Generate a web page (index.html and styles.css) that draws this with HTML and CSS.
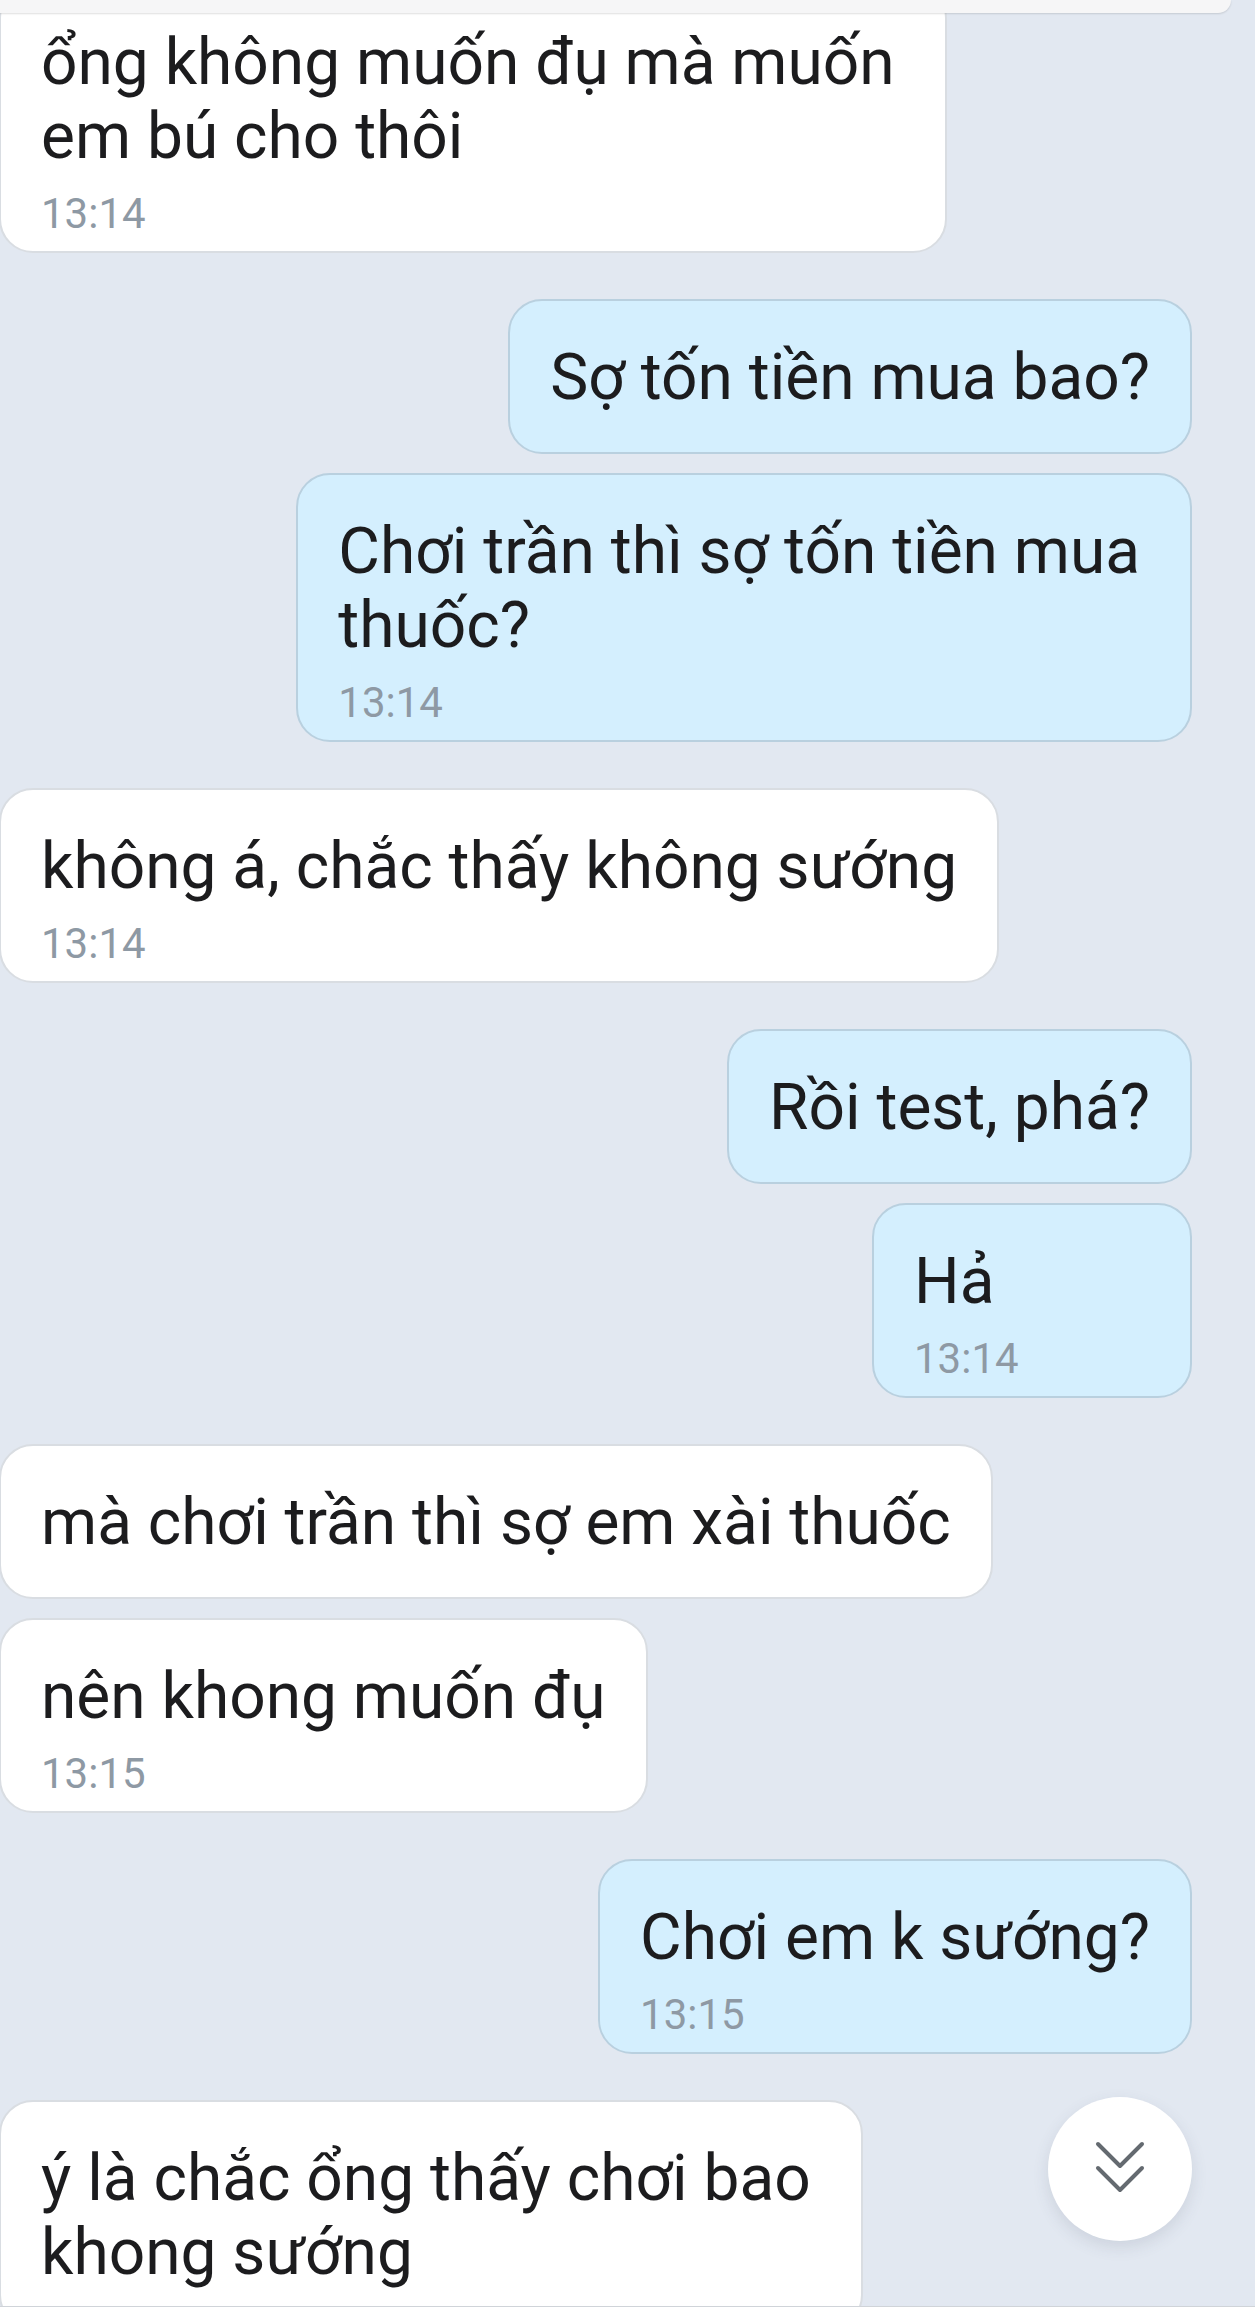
FILE: index.html
```html
<!DOCTYPE html>
<html lang="vi">
<head>
<meta charset="utf-8">
<title>Chat</title>
<link rel="stylesheet" href="styles.css">
</head>
<body>
<div class="screen">
  <div class="chat">
    <div class="group left">
      <div class="bubble in timed wrapped">
        <div class="text">ổng không muốn đụ mà muốn<br>em bú cho thôi</div>
        <div class="time">13:14</div>
      </div>
    </div>
    <div class="group right">
      <div class="bubble out">
        <div class="text">Sợ tốn tiền mua bao?</div>
      </div>
      <div class="bubble out timed wrapped">
        <div class="text">Chơi trần thì sợ tốn tiền mua<br>thuốc?</div>
        <div class="time">13:14</div>
      </div>
    </div>
    <div class="group left">
      <div class="bubble in timed">
        <div class="text">không á, chắc thấy không sướng</div>
        <div class="time">13:14</div>
      </div>
    </div>
    <div class="group right">
      <div class="bubble out">
        <div class="text">Rồi test, phá?</div>
      </div>
      <div class="bubble out timed">
        <div class="text">Hả</div>
        <div class="time">13:14</div>
      </div>
    </div>
    <div class="group left">
      <div class="bubble in">
        <div class="text">mà chơi trần thì sợ em xài thuốc</div>
      </div>
      <div class="bubble in timed">
        <div class="text">nên khong muốn đụ</div>
        <div class="time">13:15</div>
      </div>
    </div>
    <div class="group right">
      <div class="bubble out timed">
        <div class="text">Chơi em k sướng?</div>
        <div class="time">13:15</div>
      </div>
    </div>
    <div class="group left">
      <div class="bubble in wrapped">
        <div class="text">ý là chắc ổng thấy chơi bao<br>khong sướng</div>
      </div>
    </div>
  </div>

  <div class="topbar"></div>

  <div class="scroll-btn">
    <svg class="chev" viewBox="0 0 52 56" width="52" height="56" aria-hidden="true">
      <path d="M4 4 L26 26 L48 4" />
      <path d="M4 28 L26 50 L48 28" />
    </svg>
  </div>

  <div class="bottombar"></div>
</div>
</body>
</html>
```

FILE: styles.css
```css
html, body {
  margin: 0;
  padding: 0;
}

body {
  width: 1255px;
  height: 2317px;
  overflow: hidden;
  background: #e2e8f1;
  font-family: Roboto, "Noto Sans", "Liberation Sans", sans-serif;
}

.screen {
  position: relative;
  width: 1255px;
  height: 2317px;
  overflow: hidden;
}

.chat {
  display: flex;
  flex-direction: column;
  gap: 46px;
  margin-top: -16px;
  padding-right: 63px;
}

.group {
  display: flex;
  flex-direction: column;
  gap: 19px;
}

.group.left {
  align-items: flex-start;
}

.group.right {
  align-items: flex-end;
}

.bubble {
  box-sizing: border-box;
  border: 2px solid transparent;
  border-radius: 34px;
  padding: 40px 40px 37px 40px;
  white-space: nowrap;
}

.bubble.in {
  background: #ffffff;
  border-color: #d9dde2;
  margin-left: -1px;
}

.bubble.out {
  background: #d4effe;
  border-color: #b9d0df;
}

.bubble.timed {
  padding-bottom: 12px;
  min-width: 320px;
}

.bubble.wrapped {
  padding-right: 50px;
}

.text {
  font-size: 64px;
  line-height: 74px;
  color: #1c1c1e;
}

.time {
  margin-top: 15px;
  font-size: 42px;
  line-height: 50px;
  color: #8e99a4;
}

.topbar {
  position: absolute;
  top: 0;
  left: 0;
  width: 1231px;
  height: 13px;
  background: #f6f6f7;
  border-bottom-right-radius: 26px;
  box-shadow: 0 1px 2px rgba(0, 0, 0, 0.13);
}

.scroll-btn {
  position: absolute;
  left: 1048px;
  top: 2097px;
  width: 144px;
  height: 144px;
  border-radius: 50%;
  background: #ffffff;
  box-shadow: 0 6px 16px rgba(60, 70, 90, 0.13);
  display: flex;
  align-items: center;
  justify-content: center;
}

.chev {
  display: block;
  margin-top: -2px;
}

.chev path {
  fill: none;
  stroke: #646a70;
  stroke-width: 4;
  stroke-linecap: round;
  stroke-linejoin: round;
}

.bottombar {
  position: absolute;
  left: 0;
  right: 0;
  top: 2306px;
  height: 11px;
  background: #ffffff;
  border-top: 1px solid #d0d4d9;
}
```
